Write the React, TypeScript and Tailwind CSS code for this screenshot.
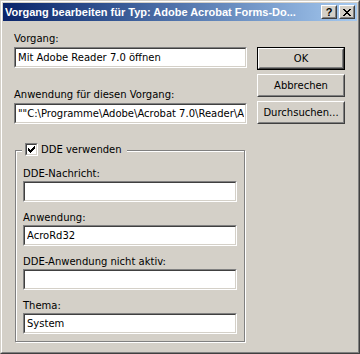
import React from 'react';

const Edit: React.FC<{ value?: string; className?: string }> = ({ value = '', className = '' }) => (
    <div className={`h-[21px] border border-t-[#808080] border-l-[#808080] border-b-white border-r-white ${className}`}>
        <div className="h-full border border-t-[#404040] border-l-[#404040] border-b-[#d4d0c8] border-r-[#d4d0c8] bg-white pl-[2px] flex items-center whitespace-nowrap overflow-hidden">
            <span className="overflow-hidden">{value}</span>
        </div>
    </div>
);

const Button: React.FC<{ label: string; isDefault?: boolean }> = ({ label, isDefault }) => (
    <div className={`w-[88px] h-[23px] ${isDefault ? 'border border-black' : ''}`}>
        <div className="h-full border border-t-white border-l-white border-b-[#404040] border-r-[#404040]">
            <div className="h-full border border-t-[#d4d0c8] border-l-[#d4d0c8] border-b-[#808080] border-r-[#808080] flex items-center justify-center">
                {label}
            </div>
        </div>
    </div>
);

const TitleButton: React.FC<{ children: React.ReactNode }> = ({ children }) => (
    <div className="w-[16px] h-[14px] bg-[#d4d0c8] border border-t-white border-l-white border-b-[#404040] border-r-[#404040]">
        <div className="h-full border border-t-[#d4d0c8] border-l-[#d4d0c8] border-b-[#808080] border-r-[#808080] flex items-center justify-center">
            {children}
        </div>
    </div>
);

const Label: React.FC<{ text: string; className?: string }> = ({ text, className = '' }) => (
    <div className={`h-[13px] leading-[13px] ${className}`}>{text}</div>
);

export default function App() {
    return (
        <div className="w-[360px] h-[354px] bg-[#d4d0c8] border border-t-[#d4d0c8] border-l-[#d4d0c8] border-b-[#404040] border-r-[#404040] text-[10px] text-black font-['DejaVu_Sans',Verdana,sans-serif]">
            <div className="h-full border border-t-white border-l-white border-b-[#808080] border-r-[#808080] p-[1px]">
                {/* title bar */}
                <div className="h-[18px] flex items-center bg-gradient-to-r from-[#0a246a] to-[#a6caf0] pl-[2px] pr-[2px]">
                    <div className="flex-1 text-white text-[11px] font-bold whitespace-nowrap overflow-hidden font-['Liberation_Sans',Arial,sans-serif]">
                        Vorgang bearbeiten für Typ: Adobe Acrobat Forms-Do...
                    </div>
                    <div className="flex items-center gap-[2px]">
                        <TitleButton>
                            <span className="font-bold text-[11px] leading-none font-['Liberation_Sans',Arial,sans-serif]">?</span>
                        </TitleButton>
                        <TitleButton>
                            <svg width="8" height="7" viewBox="0 0 8 7">
                                <path d="M0 0h2v1h1v1h2V1h1V0h2v1H7v1H6v1H5v1h1v1h1v1h1v1H6V6H5V5H3v1H2v1H0V6h1V5h1V4h1V3H2V2H1V1H0z" fill="black" />
                            </svg>
                        </TitleButton>
                    </div>
                </div>

                {/* body */}
                <div className="flex pl-[11px] pt-[11px]">
                    <div className="w-[233px]">
                        <Label text="Vorgang:" />
                        <Edit className="mt-[2px]" value="Mit Adobe Reader 7.0 öffnen" />
                        <Label className="mt-[20px]" text="Anwendung für diesen Vorgang:" />
                        <Edit className="mt-[2px]" value={'""C:\\Programme\\Adobe\\Acrobat 7.0\\Reader\\A'} />

                        <div className="relative mt-[26px] ml-[1px] w-[230px] h-[192px] border border-[#808080] shadow-[inset_1px_1px_0_#fff,1px_1px_0_#fff] pl-[7px] pt-[16px]">
                            <div className="absolute left-[6px] top-[-9px] bg-[#d4d0c8] flex items-center pl-[3px] pr-[5px] h-[15px]">
                                <div className="w-[13px] h-[13px] border border-t-[#808080] border-l-[#808080] border-b-white border-r-white">
                                    <div className="h-full border border-t-[#404040] border-l-[#404040] border-b-[#d4d0c8] border-r-[#d4d0c8] bg-white flex items-center justify-center">
                                        <svg width="7" height="7" viewBox="0 0 7 7">
                                            <path d="M6 0h1v3H6v1H5v1H4v1H3v1H2V6H1V5H0V2h1v1h1v1h1V3h1V2h1V1h1z" fill="black" />
                                        </svg>
                                    </div>
                                </div>
                                <span className="ml-[3px]">DDE verwenden</span>
                            </div>

                            <div className="w-[214px]">
                                <Label text="DDE-Nachricht:" />
                                <Edit className="mt-[1px]" />
                                <Label className="mt-[9px]" text="Anwendung:" />
                                <Edit className="mt-[1px]" value="AcroRd32" />
                                <Label className="mt-[9px]" text="DDE-Anwendung nicht aktiv:" />
                                <Edit className="mt-[1px]" />
                                <Label className="mt-[9px]" text="Thema:" />
                                <Edit className="mt-[1px]" value="System" />
                            </div>
                        </div>
                    </div>

                    <div className="ml-[10px] mt-[15px] flex flex-col gap-[4px]">
                        <Button label="OK" isDefault />
                        <Button label="Abbrechen" />
                        <Button label="Durchsuchen..." />
                    </div>
                </div>
            </div>
        </div>
    );
}
